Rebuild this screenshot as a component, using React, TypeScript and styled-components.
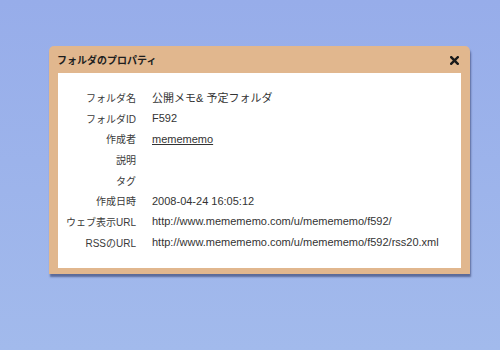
import React from 'react';
import styled, { createGlobalStyle } from 'styled-components';

const GlobalStyle = createGlobalStyle`
  html, body {
    margin: 0;
    padding: 0;
  }
  body {
    width: 500px;
    height: 350px;
    overflow: hidden;
    background: linear-gradient(180deg, #97adea 0%, #a2baec 100%);
    font-family: Tahoma, "DejaVu Sans", "Noto Sans CJK JP", sans-serif;
  }
`;

const Page = styled.div`
  padding: 46px 0 0 49px;
`;

const Dialog = styled.div`
  width: 421px;
  height: 228px;
  background: #e1b78e;
  border-radius: 5px 5px 0 0;
  box-shadow: 1px 3px 2px rgba(45, 55, 100, 0.6);
  display: flex;
  flex-direction: column;
  padding: 0 9px 6px 9px;
  box-sizing: border-box;
`;

const TitleBar = styled.div`
  height: 27px;
  display: flex;
  align-items: center;
  justify-content: space-between;
`;

const Title = styled.div`
  font-family: "Noto Sans CJK JP", sans-serif;
  font-size: 10px;
  font-weight: 700;
  color: #1e1e1e;
  margin-left: -1px;
`;

const Close = styled.svg`
  width: 9px;
  height: 9px;
  margin-right: 2px;
  margin-top: 1px;
`;

const Panel = styled.div`
  flex: 1;
  background: #ffffff;
  padding-top: 14px;
`;

const Table = styled.div`
  display: grid;
  grid-template-columns: 78px 1fr;
  grid-auto-rows: 20.7px;
  column-gap: 16px;
  align-items: center;
`;

const Label = styled.div`
  text-align: right;
  font-family: "Liberation Sans", "Noto Sans CJK JP", sans-serif;
  font-size: 10px;
  color: #3a3a3a;
`;

const Value = styled.div<{ $link?: boolean }>`
  font-family: "Liberation Sans", "Noto Sans CJK JP", sans-serif;
  font-size: 11px;
  color: #333;
  text-decoration: ${(p) => (p.$link ? 'underline' : 'none')};
  white-space: nowrap;
`;

const rows: { label: string; value: string; link?: boolean }[] = [
  { label: 'フォルダ名', value: '公開メモ& 予定フォルダ' },
  { label: 'フォルダID', value: 'F592' },
  { label: '作成者', value: 'memememo', link: true },
  { label: '説明', value: '' },
  { label: 'タグ', value: '' },
  { label: '作成日時', value: '2008-04-24 16:05:12' },
  { label: 'ウェブ表示URL', value: 'http://www.memememo.com/u/memememo/f592/' },
  { label: 'RSSのURL', value: 'http://www.memememo.com/u/memememo/f592/rss20.xml' },
];

const App: React.FC = () => (
  <>
    <GlobalStyle />
    <Page>
      <Dialog>
        <TitleBar>
          <Title>フォルダのプロパティ</Title>
          <Close viewBox="0 0 9 9">
            <path d="M1.2 1.2 L7.8 7.8 M7.8 1.2 L1.2 7.8" stroke="#1a1a1a" strokeWidth="2.4" strokeLinecap="square" />
          </Close>
        </TitleBar>
        <Panel>
          <Table>
            {rows.map((r) => (
              <React.Fragment key={r.label}>
                <Label>{r.label}</Label>
                <Value $link={r.link}>{r.value}</Value>
              </React.Fragment>
            ))}
          </Table>
        </Panel>
      </Dialog>
    </Page>
  </>
);

export default App;
